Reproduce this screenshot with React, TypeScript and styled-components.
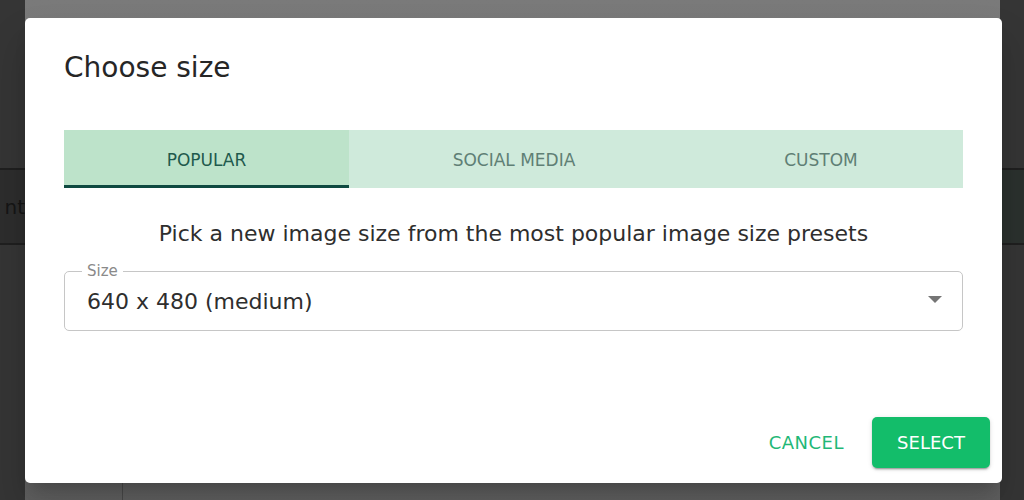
import React, { useState } from "react";
import styled, { createGlobalStyle } from "styled-components";

const Global = createGlobalStyle`
  html, body { margin: 0; padding: 0; }
  body {
    width: 1024px;
    height: 500px;
    overflow: hidden;
    font-family: "DejaVu Sans", "Noto Sans", sans-serif;
    font-feature-settings: "calt" 0;
  }
  * { box-sizing: border-box; }
`;

const Page = styled.div`
  position: relative;
  width: 1024px;
  height: 500px;
  display: flex;
  background: #333333;
`;

const SideStrip = styled.div<{ $w: number }>`
  width: ${(p) => p.$w}px;
  flex: none;
  display: flex;
  flex-direction: column;
  background: #353535;
  overflow: hidden;
`;

const SideSpacer = styled.div<{ $h: number }>`
  height: ${(p) => p.$h}px;
  flex: none;
`;

const SideBand = styled.div<{ $bg: string }>`
  height: 77px;
  flex: none;
  border-top: 2px solid #1f1f1f;
  border-bottom: 2px solid #1f1f1f;
  background: ${(p) => p.$bg};
  display: flex;
  align-items: center;
  justify-content: flex-end;
  font-size: 20px;
  color: #151515;
  white-space: nowrap;
`;

const Middle = styled.div`
  flex: 1;
  display: flex;
  flex-direction: column;
  background: linear-gradient(#7a7a7a, #6c6c6c 60%, #616161);
`;

const MiddleTop = styled.div`
  flex: 1;
`;

const MiddleBottom = styled.div`
  height: 17px;
  display: flex;
`;

const MiddleCell = styled.div`
  width: 98px;
  border-right: 1px solid #4a4a4a;
`;

const Dialog = styled.div`
  position: absolute;
  left: 25px;
  top: 18px;
  width: 977px;
  height: 465px;
  background: #ffffff;
  border-radius: 5px;
  box-shadow: 0 11px 15px -7px rgba(0,0,0,0.2), 0 24px 38px 3px rgba(0,0,0,0.14);
  display: flex;
  flex-direction: column;
`;

const Title = styled.h2`
  margin: 0;
  padding: 33px 39px 0;
  font-size: 28px;
  line-height: 34px;
  font-weight: 400;
  color: #262626;
`;

const Content = styled.div`
  padding: 45px 39px 0;
  display: flex;
  flex-direction: column;
`;

const TabBar = styled.div`
  display: grid;
  grid-template-columns: 285fr 330fr 284fr;
  height: 58px;
  background: #cfeadb;
`;

const Tab = styled.button<{ $active: boolean }>`
  border: none;
  margin: 0;
  padding: 4px 0 0;
  font-family: inherit;
  font-size: 17px;
  text-transform: uppercase;
  background: ${(p) => (p.$active ? "#bde3ca" : "transparent")};
  color: ${(p) => (p.$active ? "#1f5a4d" : "#5f7f75")};
  border-bottom: 3px solid ${(p) => (p.$active ? "#0f4a41" : "transparent")};
  cursor: pointer;
`;

const Description = styled.p`
  margin: 31px 0 0;
  text-align: center;
  font-size: 22px;
  line-height: 30px;
  color: #2e2e2e;
`;

const Field = styled.div`
  margin-top: 22px;
  padding: 0 22px;
  height: 60px;
  border: 1px solid #c6c6c6;
  border-radius: 5px;
  display: flex;
  align-items: center;
  justify-content: space-between;
  position: relative;
`;

const FieldLabel = styled.span`
  position: absolute;
  left: 17px;
  top: -9px;
  padding: 0 5px;
  background: #ffffff;
  font-size: 15px;
  line-height: 16px;
  color: #8a8a8a;
`;

const Value = styled.span`
  font-size: 22px;
  color: #2e2e2e;
`;

const Arrow = styled.svg`
  margin-right: -2px;
  margin-top: -4px;
`;

const Actions = styled.div`
  margin-top: auto;
  padding: 0 12px 15px;
  display: flex;
  justify-content: flex-end;
  align-items: center;
  gap: 12px;
`;

const TextButton = styled.button`
  border: none;
  background: transparent;
  font-family: inherit;
  font-size: 18px;
  letter-spacing: 0.5px;
  color: #1fb877;
  padding: 0 16px;
  height: 51px;
  cursor: pointer;
`;

const PrimaryButton = styled.button`
  border: none;
  background: #13bd6a;
  color: #ffffff;
  font-family: inherit;
  font-size: 18px;
  width: 118px;
  height: 51px;
  border-radius: 5px;
  box-shadow: 0 3px 1px -2px rgba(0,0,0,0.2), 0 2px 2px 0 rgba(0,0,0,0.14), 0 1px 5px 0 rgba(0,0,0,0.12);
  cursor: pointer;
`;

const tabs = ["Popular", "Social media", "Custom"];

export default function App() {
  const [active, setActive] = useState(0);
  return (
    <>
      <Global />
      <Page>
        <SideStrip $w={25}>
          <SideSpacer $h={168} />
          <SideBand $bg="#2d2d2d">nt</SideBand>
        </SideStrip>
        <Middle>
          <MiddleTop />
          <MiddleBottom>
            <MiddleCell />
          </MiddleBottom>
        </Middle>
        <SideStrip $w={24}>
          <SideSpacer $h={168} />
          <SideBand $bg="#2b312e" />
        </SideStrip>
        <Dialog>
          <Title>Choose size</Title>
          <Content>
            <TabBar>
              {tabs.map((t, i) => (
                <Tab key={t} $active={i === active} onClick={() => setActive(i)}>
                  {t}
                </Tab>
              ))}
            </TabBar>
            <Description>Pick a new image size from the most popular image size presets</Description>
            <Field>
              <FieldLabel>Size</FieldLabel>
              <Value>640 x 480 (medium)</Value>
              <Arrow width="14" height="7" viewBox="0 0 14 7">
                <path d="M0 0h14L7 7z" fill="#757575" />
              </Arrow>
            </Field>
          </Content>
          <Actions>
            <TextButton>CANCEL</TextButton>
            <PrimaryButton>SELECT</PrimaryButton>
          </Actions>
        </Dialog>
      </Page>
    </>
  );
}
